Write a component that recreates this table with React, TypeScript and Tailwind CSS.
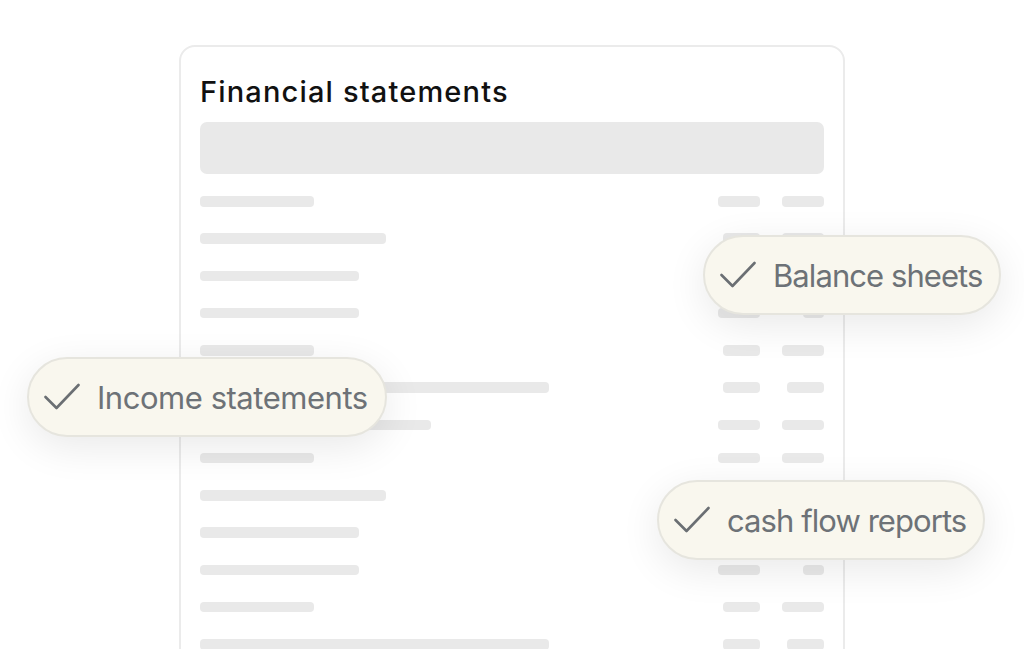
const rows: { left: number; a: number; b: number }[][] = [
  [
    { left: 114, a: 42, b: 42 },
    { left: 186, a: 37, b: 42 },
    { left: 159, a: 42, b: 42 },
    { left: 159, a: 42, b: 21 },
    { left: 114, a: 37, b: 42 },
    { left: 349, a: 37, b: 37 },
    { left: 231, a: 42, b: 42 },
  ],
  [
    { left: 114, a: 42, b: 42 },
    { left: 186, a: 37, b: 42 },
    { left: 159, a: 42, b: 42 },
    { left: 159, a: 42, b: 21 },
    { left: 114, a: 37, b: 42 },
    { left: 349, a: 37, b: 37 },
  ],
];

function Check() {
  return (
    <svg width="36" height="28" viewBox="0 0 36 28" fill="none" className="shrink-0">
      <polyline
        points="1.5,14 12.5,25 34.5,2"
        stroke="#6b6f73"
        strokeWidth="2.6"
        strokeLinecap="round"
        strokeLinejoin="round"
      />
    </svg>
  );
}

function Pill({ label, className, tracking }: { label: string; className: string; tracking: string }) {
  return (
    <div
      className={`absolute flex h-[80px] items-center gap-[17px] rounded-full border-2 border-[#e6e5de] bg-[#f9f7ee] pl-[15px] pr-[17px] shadow-[0_10px_40px_rgba(0,0,0,0.09)] ${className}`}
    >
      <Check />
      <span className={`text-[31px] font-normal text-[#6d7277] whitespace-nowrap leading-none ${tracking}`}>
        {label}
      </span>
    </div>
  );
}

export default function App() {
  return (
    <div
      className="relative h-[649px] w-[1024px] overflow-hidden bg-white"
      style={{ fontFamily: "Inter, 'Noto Sans', sans-serif" }}
    >
      {/* Statement card */}
      <div className="ml-[179px] mt-[45px] w-[666px] rounded-[16px] border-2 border-[#ebebeb] px-[19px] pt-[27px] pb-10">
        <h2 className="text-[29px] font-medium leading-[36px] tracking-[0.04em] text-[#111]">
          Financial statements
        </h2>
        <div className="mt-[12px] h-[52px] rounded-[7px] bg-[#e9e9e9]" />

        <div className="mt-[22px] flex flex-col gap-[22.5px]">
          {rows.map((group, gi) => (
            <div key={gi} className="flex flex-col gap-[26.8px]">
              {group.map((r, i) => (
                <div key={i} className="flex h-[10.5px] items-center justify-between">
                  <div className="h-full rounded-[4px] bg-[#e9e9e9]" style={{ width: r.left }} />
                  <div className="flex h-full gap-[22px]">
                    <div className="flex w-[42px] justify-end">
                      <div className="h-full rounded-[4px] bg-[#e9e9e9]" style={{ width: r.a }} />
                    </div>
                    <div className="flex w-[42px] justify-end">
                      <div className="h-full rounded-[4px] bg-[#e9e9e9]" style={{ width: r.b }} />
                    </div>
                  </div>
                </div>
              ))}
            </div>
          ))}
        </div>
      </div>

      <Pill label="Balance sheets" tracking="tracking-[-0.03em]" className="left-[703px] top-[235px]" />
      <Pill label="Income statements" tracking="tracking-[-0.015em]" className="left-[27px] top-[357px]" />
      <Pill label="cash flow reports" tracking="tracking-[-0.03em]" className="left-[657px] top-[480px]" />
    </div>
  );
}
